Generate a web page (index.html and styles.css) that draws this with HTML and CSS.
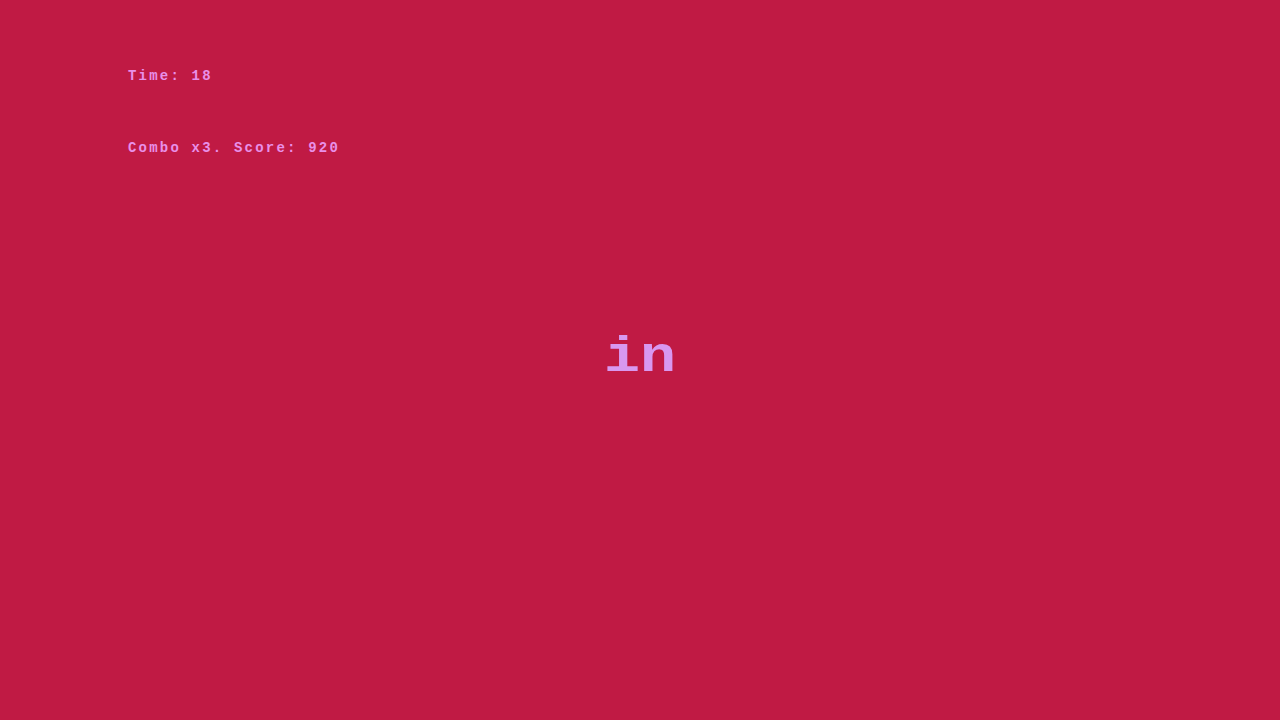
FILE: index.html
```html
<!DOCTYPE html>
<html>
<head>
<meta charset="utf-8">
<link rel="stylesheet" href="styles.css">
</head>
<body>
<div class="screen">
  <div class="hud">
    <div class="hud-line time">Time: 18</div>
    <div class="hud-line combo">Combo x3. Score: 920</div>
  </div>
  <div class="word-area">
    <div class="word">in</div>
  </div>
</div>
</body>
</html>
```
FILE: styles.css
```css
html, body {
  margin: 0;
  padding: 0;
  width: 1280px;
  height: 720px;
  background: #c01a44;
  overflow: hidden;
}
.screen {
  width: 1280px;
  height: 720px;
  display: flex;
  flex-direction: column;
}
.hud {
  padding: 68px 0 0 128px;
  display: flex;
  flex-direction: column;
  gap: 55px;
}
.hud-line {
  font-family: "Liberation Mono", "DejaVu Sans Mono", monospace;
  font-weight: bold;
  font-size: 14px;
  line-height: 17px;
  letter-spacing: 2.2px;
  color: #e890e8;
}
.word-area {
  flex: 1;
  display: flex;
  justify-content: center;
  padding-top: 176px;
}
.word {
  font-family: "Liberation Mono", "DejaVu Sans Mono", monospace;
  font-weight: bold;
  font-size: 50px;
  line-height: 50px;
  color: #d898f0;
  transform: scaleX(1.2);
}
```
